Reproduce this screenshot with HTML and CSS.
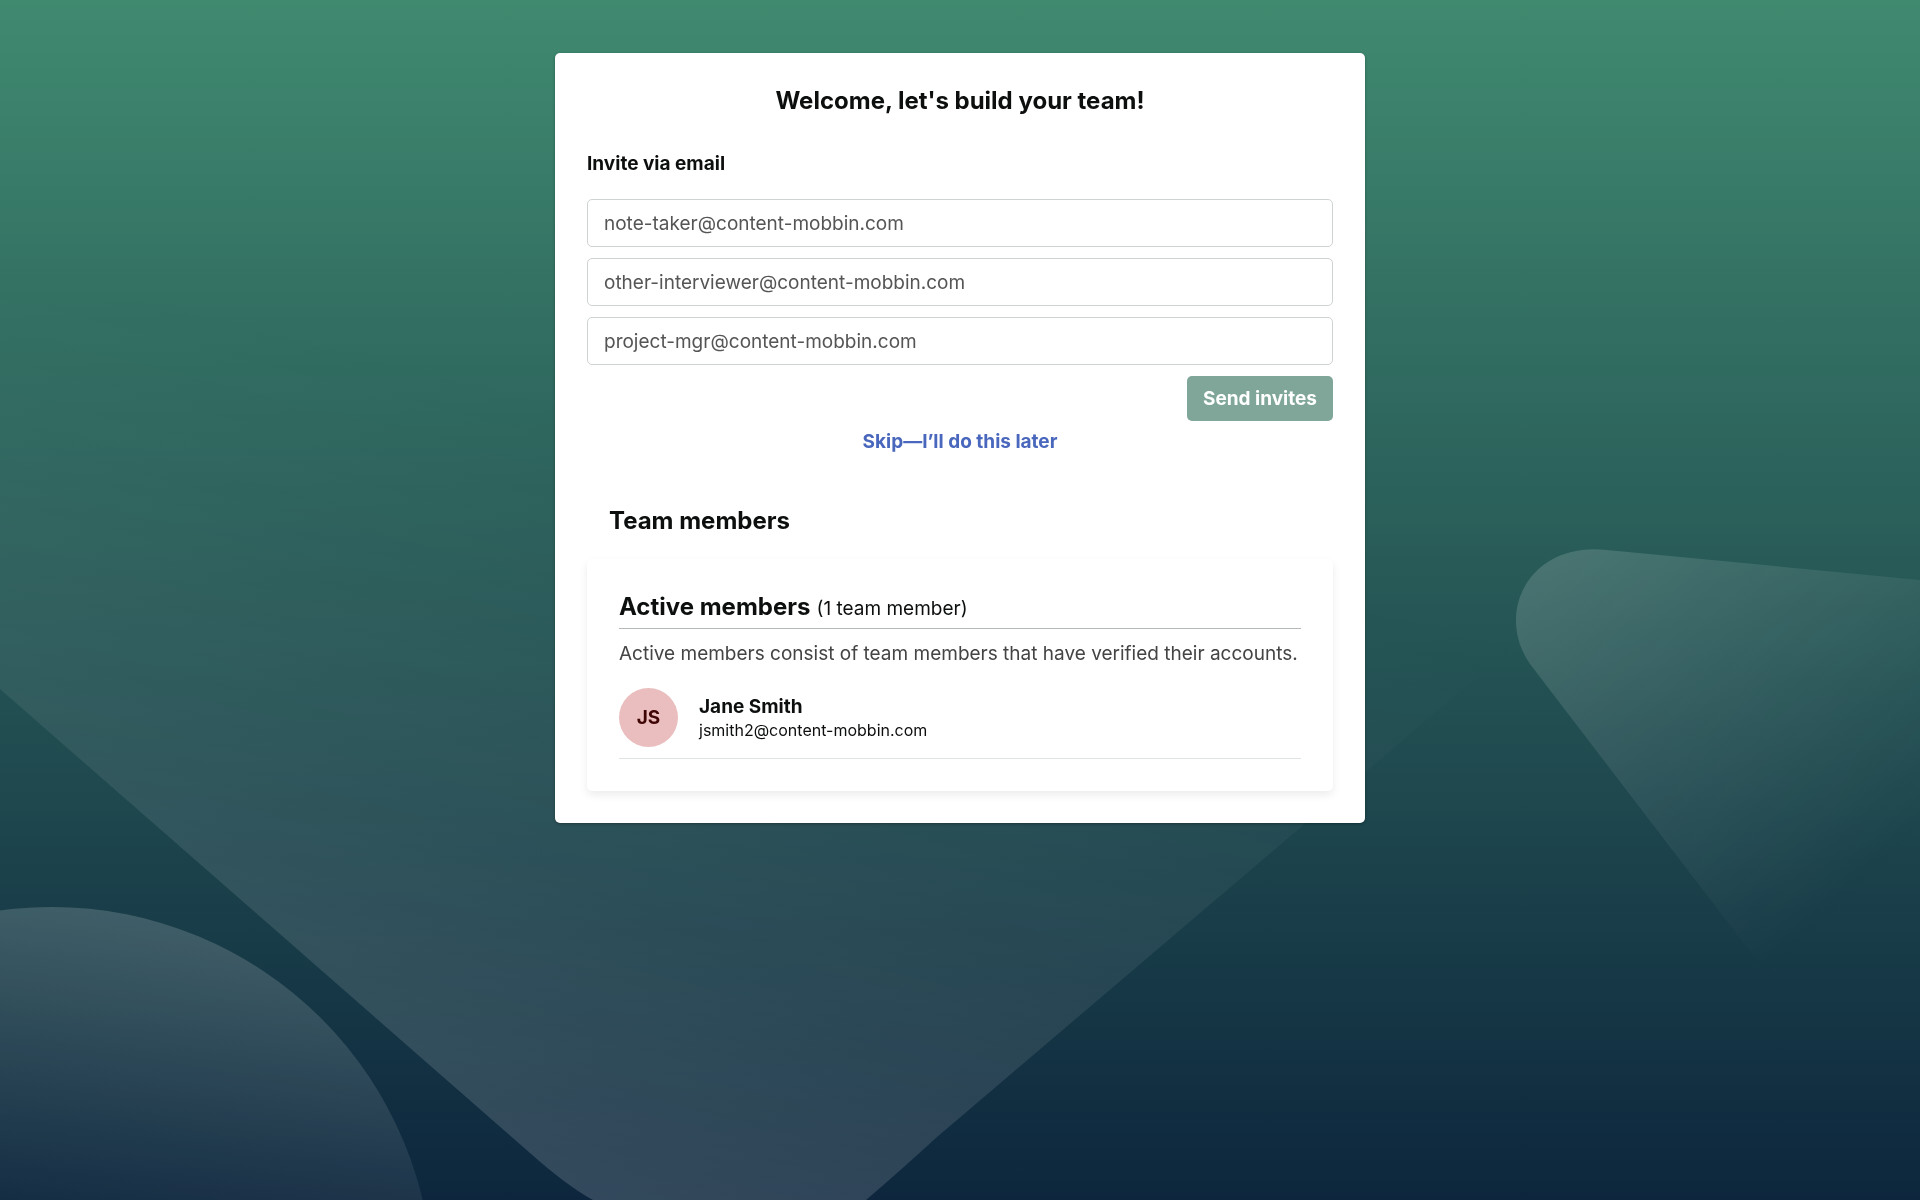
FILE: index.html
```html
<!DOCTYPE html>
<html lang="en">
<head>
    <meta charset="UTF-8">
    <meta name="viewport" content="width=device-width, initial-scale=1.0">
    <title>Build your team</title>
    <link rel="stylesheet" href="styles.css">
</head>
<body>
    <svg class="backdrop" viewBox="0 0 1920 1200" preserveAspectRatio="xMidYMid slice" aria-hidden="true">
        <defs>
            <linearGradient id="diamondFill" gradientUnits="userSpaceOnUse" x1="600" y1="1200" x2="790" y2="450">
                <stop offset="0" stop-color="#fff" stop-opacity="0.16"/>
                <stop offset="0.4" stop-color="#fff" stop-opacity="0.08"/>
                <stop offset="0.8" stop-color="#fff" stop-opacity="0.02"/>
                <stop offset="1" stop-color="#fff" stop-opacity="0"/>
            </linearGradient>
            <linearGradient id="circleFill" gradientUnits="userSpaceOnUse" x1="110" y1="907" x2="40" y2="1290">
                <stop offset="0" stop-color="#fff" stop-opacity="0.17"/>
                <stop offset="1" stop-color="#fff" stop-opacity="0"/>
            </linearGradient>
            <linearGradient id="triangleFill" gradientUnits="userSpaceOnUse" x1="1540" y1="580" x2="1850" y2="900">
                <stop offset="0" stop-color="#fff" stop-opacity="0.15"/>
                <stop offset="1" stop-color="#fff" stop-opacity="0"/>
            </linearGradient>
        </defs>
        <path fill="url(#diamondFill)" d="M0 300H1920L937 1137Q900 1171 866 1200Q730 1290 593 1200Q567 1186 530 1153L0 689Z"/>
        <circle fill="url(#circleFill)" cx="52" cy="1288" r="381"/>
        <path fill="url(#triangleFill)" d="M1920 580L1607 550C1530 541 1494 612 1530 664L1800 1017H1920Z"/>
    </svg>

    <main class="card">
        <h1 class="title">Welcome, let's build your team!</h1>

        <form class="invite-form">
            <h2 class="invite-title">Invite via email</h2>
            <input class="email-input" type="email" placeholder="note-taker@content-mobbin.com" aria-label="First email">
            <input class="email-input" type="email" placeholder="other-interviewer@content-mobbin.com" aria-label="Second email">
            <input class="email-input" type="email" placeholder="project-mgr@content-mobbin.com" aria-label="Third email">
            <button class="send-button" type="submit" disabled>Send invites</button>
        </form>
        <a class="skip-link" href="#">Skip—I’ll do this later</a>

        <h2 class="team-title">Team members</h2>
        <section class="members">
            <div class="members-header">
                <h3 class="members-title">Active members</h3>
                <span>(1 team member)</span>
            </div>
            <p class="members-info">Active members consist of team members that have verified their accounts.</p>
            <div class="member">
                <div class="avatar">JS</div>
                <div>
                    <div class="member-name">Jane Smith</div>
                    <div class="member-email">jsmith2@content-mobbin.com</div>
                </div>
            </div>
        </section>
    </main>
</body>
</html>
```

FILE: styles.css
```css
* {
    box-sizing: border-box;
}
body {
    margin: 0;
    min-height: 100vh;
    padding: 53px 20px;
    font-family: Inter, sans-serif;
    font-size: 19px;
    line-height: 24px;
    color: #0d0f0f;
    background: linear-gradient(#408a70, #0d263d) no-repeat #0d263d;
}
h1, h2, h3, p {
    margin: 0;
}
.backdrop {
    position: fixed;
    top: 0;
    left: 0;
    width: 100%;
    height: 100%;
    z-index: -1;
}
.card {
    display: flex;
    flex-direction: column;
    max-width: 810px;
    margin: 0 auto;
    padding: 32px;
    background-color: #fff;
    border-radius: 5px;
    box-shadow: 0 1px 3px rgba(0, 0, 0, 0.3);
}
.title {
    font-size: 24px;
    line-height: 32px;
    text-align: center;
}
.invite-form {
    display: flex;
    flex-direction: column;
    gap: 11px;
    margin-top: 35px;
}
.invite-title {
    font-size: 19px;
    margin-bottom: 12px;
}
.email-input {
    width: 100%;
    height: 48px;
    padding: 0 16px;
    border: 1px solid #cfd3d3;
    border-radius: 5px;
    font: inherit;
    background-color: #fff;
}
.email-input::placeholder {
    color: #555;
    opacity: 1;
}
.send-button {
    align-self: flex-end;
    height: 45px;
    padding: 0 16px;
    border: none;
    border-radius: 5px;
    font: inherit;
    font-weight: 700;
    color: #fff;
    background-color: #7fa699;
}
.skip-link {
    align-self: center;
    margin-top: 9px;
    font-weight: 700;
    color: #4867bd;
    text-decoration: none;
}
.team-title {
    margin: 51px 0 22px 22px;
    font-size: 24px;
    line-height: 32px;
}
.members {
    padding: 32px;
    border-radius: 5px;
    box-shadow: 0 4px 8px rgba(0, 0, 0, 0.08);
}
.members-header {
    display: flex;
    align-items: baseline;
    gap: 6px;
    padding-bottom: 5px;
    border-bottom: 1px solid #b5b8b8;
}
.members-title {
    font-size: 24px;
    line-height: 32px;
}
.members-info {
    margin-top: 13px;
    color: #444;
}
.member {
    display: flex;
    align-items: center;
    gap: 21px;
    padding: 22px 0 11px;
    border-bottom: 1px solid #dfe3e3;
}
.avatar {
    display: flex;
    align-items: center;
    justify-content: center;
    width: 59px;
    height: 59px;
    border-radius: 50%;
    font-weight: 700;
    color: #400606;
    background-color: #eabebe;
}
.member-name {
    font-weight: 700;
}
.member-email {
    font-size: 16px;
    line-height: 22px;
}
```
